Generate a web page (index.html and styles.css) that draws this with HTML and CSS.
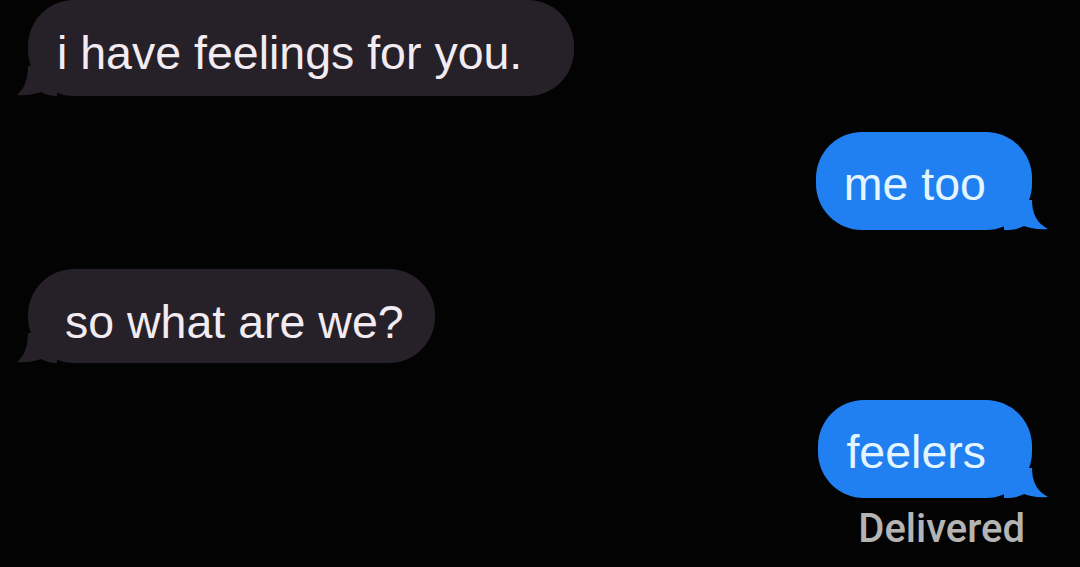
FILE: index.html
```html
<!DOCTYPE html>
<html lang="en">
<head>
<meta charset="utf-8">
<title>Messages</title>
<link rel="stylesheet" href="styles.css">
</head>
<body>
<main class="thread">
  <div class="msg in first wide">
    <span class="txt">i have feelings for you.</span>
    <svg class="tail tail-l" viewBox="0 0 40 30" width="40" height="30" aria-hidden="true"><path d="M11 0 C11 14 7 23 0 29 C10 30 18 28 24 26 C28 28 33 30 40 30 L40 0 Z"/></svg>
  </div>
  <div class="msg out gap-a">
    <span class="txt">me too</span>
    <svg class="tail tail-r" viewBox="0 0 44 30" width="44" height="30" aria-hidden="true"><path d="M28 0 C28 14 33 23 44 29 C34 30 26 28 20 26 C16 28 11 30 0 30 L0 0 Z"/></svg>
  </div>
  <div class="msg in gap-b inset">
    <span class="txt">so what are we?</span>
    <svg class="tail tail-l" viewBox="0 0 40 30" width="40" height="30" aria-hidden="true"><path d="M11 0 C11 14 7 23 0 29 C10 30 18 28 24 26 C28 28 33 30 40 30 L40 0 Z"/></svg>
  </div>
  <div class="msg out gap-c">
    <span class="txt">feelers</span>
    <svg class="tail tail-r" viewBox="0 0 44 30" width="44" height="30" aria-hidden="true"><path d="M28 0 C28 14 33 23 44 29 C34 30 26 28 20 26 C16 28 11 30 0 30 L0 0 Z"/></svg>
  </div>
  <div class="status">Delivered</div>
</main>
</body>
</html>
```

FILE: styles.css
```css
html, body {
  margin: 0;
  padding: 0;
  background: #030303;
}

.thread {
  width: 1080px;
  height: 567px;
  box-sizing: border-box;
  padding: 0 48px 0 28px;
  display: flex;
  flex-direction: column;
  overflow: hidden;
}

.msg {
  position: relative;
  box-sizing: border-box;
  height: 96px;
  padding: 25px 30px 15px 29px;
  border-radius: 46px;
  font-family: "Liberation Sans", Arial, sans-serif;
  font-size: 46.5px;
  line-height: 56px;
  white-space: nowrap;
}

.in {
  align-self: flex-start;
  background: #262128;
  color: #f2ebf2;
}

.in .tail { fill: #262128; }

.out {
  align-self: flex-end;
  height: 98px;
  background: #2080f2;
  color: #e3f6ff;
  padding: 24px 46px 18px 28px;
}

.out .tail { fill: #2080f2; }

.wide { padding-right: 52px; }
.inset { padding-left: 37px; padding-right: 31px; }

.first { margin-top: 0; }
.gap-a { margin-top: 36px; }
.gap-b { margin-top: 39px; height: 94px; }
.gap-c { margin-top: 37px; }

.txt {
  position: relative;
  z-index: 1;
}

.tail {
  position: absolute;
  bottom: 0;
  display: block;
}

.tail-l { left: -11px; }
.tail-r { right: -16px; }

.status {
  align-self: flex-end;
  margin-top: 9px;
  margin-right: 7px;
  font-family: Roboto, "Liberation Sans", sans-serif;
  font-weight: 500;
  font-size: 40px;
  line-height: 44px;
  color: #b4b4b4;
}
```
